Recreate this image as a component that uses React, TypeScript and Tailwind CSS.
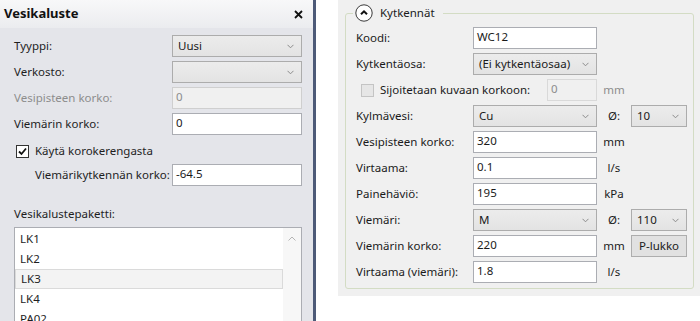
import React from "react";

const FONT = "font-['Noto_Sans',sans-serif]";

const Chevron = () => (
    <svg width="7" height="5" viewBox="0 0 7 5" className="shrink-0">
        <path d="M0.5 0.8 L3.5 3.8 L6.5 0.8" fill="none" stroke="#8c8c8c" strokeWidth="1" />
    </svg>
);

// WPF tyylinen alasvetovalikko
function Select({ value, className }: { value: string; className: string }) {
    return (
        <div
            className={`flex h-[22px] items-center justify-between border border-[#acacac] bg-gradient-to-b from-[#ececec] to-[#e3e3e3] pl-[5px] pr-[7px] ${className}`}
        >
            <span className="whitespace-nowrap text-[11.5px] leading-none text-[#1a1a1a]">{value}</span>
            <Chevron />
        </div>
    );
}

function TextBox({
    value,
    className,
    disabled,
}: {
    value: string;
    className: string;
    disabled?: boolean;
}) {
    return (
        <div
            className={`flex h-[22px] items-start border pl-[3px] pt-[2px] text-[11.5px] leading-[14px] ${
                disabled
                    ? "border-[#cfcfcf] bg-[#f0f0f0] text-[#8d8d8d]"
                    : "border-[#abadb3] bg-white text-[#1a1a1a]"
            } ${className}`}
        >
            {value}
        </div>
    );
}

function CheckBox({ checked, disabled }: { checked?: boolean; disabled?: boolean }) {
    return (
        <div
            className={`flex h-[13px] w-[13px] shrink-0 items-center justify-center border ${
                disabled ? "border-[#c4c4c4] bg-[#e6e6e6]" : "border-[#333333] bg-white"
            }`}
        >
            {checked && (
                <svg width="9" height="9" viewBox="0 0 9 9">
                    <path d="M1 4.5 L3.5 7 L8 1.5" fill="none" stroke="#111" strokeWidth="1.8" />
                </svg>
            )}
        </div>
    );
}

function LeftRow({
    label,
    children,
    disabled,
}: {
    label: string;
    children: React.ReactNode;
    disabled?: boolean;
}) {
    return (
        <div className="flex h-[22px] items-center">
            <span
                className={`w-[158px] whitespace-nowrap text-[11.5px] ${disabled ? "text-[#8d8d8d]" : "text-[#1e1e1e]"}`}
            >
                {label}
            </span>
            {children}
        </div>
    );
}

function RightRow({
    label,
    children,
    unit,
    extra,
}: {
    label: string;
    children: React.ReactNode;
    unit?: React.ReactNode;
    extra?: React.ReactNode;
}) {
    return (
        <div className="flex h-[22px] items-center">
            <span className="w-[117px] whitespace-nowrap text-[11.5px] text-[#1b1b1b]">{label}</span>
            {children}
            {unit !== undefined && (
                <span className="w-[34px] text-center text-[11.5px] text-[#1b1b1b]">{unit}</span>
            )}
            {extra}
        </div>
    );
}

const listItems = ["LK1", "LK2", "LK3", "LK4", "PA02"];

export default function App() {
    return (
        <div className={`flex h-[321px] w-[700px] overflow-hidden bg-white ${FONT}`}>
            {/* Vasen paneeli */}
            <div className="flex h-full w-[316px] shrink-0 flex-col border-r-[3px] border-[#4d5a78] bg-[#e4e5ea]">
                <div className="flex h-[28px] shrink-0 items-center justify-between bg-gradient-to-b from-[#f8f8f9] to-[#ebecef] pl-[4px] pr-[10px]">
                    <span className="text-[13px] font-bold text-[#111]">Vesikaluste</span>
                    <svg width="9" height="9" viewBox="0 0 9 9">
                        <path d="M1 1 L8 8 M8 1 L1 8" stroke="#111" strokeWidth="1.8" />
                    </svg>
                </div>
                <div className="flex flex-col pl-[14px] pr-[11px] pt-[7px]">
                    <div className="flex flex-col gap-[4px]">
                        <LeftRow label="Tyyppi:">
                            <Select value="Uusi" className="w-[130px]" />
                        </LeftRow>
                        <LeftRow label="Verkosto:">
                            <Select value="" className="w-[130px]" />
                        </LeftRow>
                        <LeftRow label="Vesipisteen korko:" disabled>
                            <TextBox value="0" disabled className="w-[130px]" />
                        </LeftRow>
                        <LeftRow label="Viemärin korko:">
                            <TextBox value="0" className="w-[130px]" />
                        </LeftRow>
                    </div>
                    <div className="mt-[5px] flex h-[22px] items-center gap-[6px] pl-[2px]">
                        <CheckBox checked />
                        <span className="text-[11.5px] text-[#1e1e1e]">Käytä korokerengasta</span>
                    </div>
                    <div className="mt-[2px] flex h-[22px] items-center">
                        <span className="w-[158px] whitespace-nowrap pl-[21px] text-[11.5px] text-[#1e1e1e]">
                            Viemärikytkennän korko:
                        </span>
                        <TextBox value="-64.5" className="w-[130px]" />
                    </div>
                    <span className="mt-[19px] text-[11.5px] leading-[18px] text-[#1e1e1e]">
                        Vesikalustepaketti:
                    </span>
                    <div className="mt-[4px] flex h-[120px] border border-[#abadb3] bg-white">
                        <div className="flex flex-1 flex-col pt-[1px]">
                            {listItems.map((item) => (
                                <div
                                    key={item}
                                    className={`flex h-[20px] shrink-0 items-center pl-[5px] text-[11.5px] text-[#1e1e1e] ${
                                        item === "LK3" ? "border border-[#dadada] bg-[#f3f3f3] pl-[4px]" : ""
                                    }`}
                                >
                                    {item}
                                </div>
                            ))}
                        </div>
                        <div className="flex w-[18px] justify-center bg-[#f7f7f7] pt-[8px]">
                            <svg width="8" height="5" viewBox="0 0 8 5">
                                <path d="M0.5 4.5 L4 1 L7.5 4.5" fill="none" stroke="#b5b5b5" strokeWidth="1" />
                            </svg>
                        </div>
                    </div>
                </div>
            </div>

            {/* Oikea paneeli */}
            <div className="ml-[22px] flex h-[296px] flex-1 bg-[#f0f0f0] pb-[7px] pl-[7px] pr-[6px] pt-[4px]">
                <fieldset className="flex flex-1 flex-col rounded-[3px] border border-[#d3dcc4]">
                    <legend className="ml-[7px] flex items-center gap-[7px] pl-[2px] pr-[8px]">
                        <svg width="18" height="18" viewBox="0 0 18 18">
                            <circle cx="9" cy="9" r="8.2" fill="white" stroke="#3a3a3a" strokeWidth="1" />
                            <path d="M6 10.3 L9 7.3 L12 10.3" fill="none" stroke="#111" strokeWidth="2" />
                        </svg>
                        <span className="text-[11.5px] text-[#1b1b1b]">Kytkennät</span>
                    </legend>
                    <div className="mt-[5px] flex flex-col gap-[4px] pl-[10px]">
                        <RightRow label="Koodi:">
                            <TextBox value="WC12" className="w-[124px]" />
                        </RightRow>
                        <RightRow label="Kytkentäosa:">
                            <Select value="(Ei kytkentäosaa)" className="w-[124px]" />
                        </RightRow>
                        <div className="flex h-[22px] items-center">
                            <div className="flex w-[191px] items-center gap-[6px] pl-[5px]">
                                <CheckBox disabled />
                                <span className="whitespace-nowrap text-[11.5px] text-[#1b1b1b]">
                                    Sijoitetaan kuvaan korkoon:
                                </span>
                            </div>
                            <TextBox value="0" disabled className="w-[50px] border-[#d9d9d9]" />
                            <span className="w-[34px] text-center text-[11.5px] text-[#8d8d8d]">mm</span>
                        </div>
                        <RightRow
                            label="Kylmävesi:"
                            unit="Ø:"
                            extra={<Select value="10" className="w-[56px]" />}
                        >
                            <Select value="Cu" className="w-[124px]" />
                        </RightRow>
                        <RightRow label="Vesipisteen korko:" unit="mm">
                            <TextBox value="320" className="w-[124px]" />
                        </RightRow>
                        <RightRow label="Virtaama:" unit="l/s">
                            <TextBox value="0.1" className="w-[124px]" />
                        </RightRow>
                        <RightRow label="Painehäviö:" unit="kPa">
                            <TextBox value="195" className="w-[124px]" />
                        </RightRow>
                        <RightRow
                            label="Viemäri:"
                            unit="Ø:"
                            extra={<Select value="110" className="w-[56px]" />}
                        >
                            <Select value="M" className="w-[124px]" />
                        </RightRow>
                        <RightRow
                            label="Viemärin korko:"
                            unit="mm"
                            extra={
                                <button
                                    type="button"
                                    className="flex h-[22px] w-[56px] items-center justify-center border border-[#adadad] bg-[#e1e1e1] text-[11.5px] text-[#1b1b1b]"
                                >
                                    P-lukko
                                </button>
                            }
                        >
                            <TextBox value="220" className="w-[124px]" />
                        </RightRow>
                        <RightRow label="Virtaama (viemäri):" unit="l/s">
                            <TextBox value="1.8" className="w-[124px]" />
                        </RightRow>
                    </div>
                </fieldset>
            </div>
        </div>
    );
}
